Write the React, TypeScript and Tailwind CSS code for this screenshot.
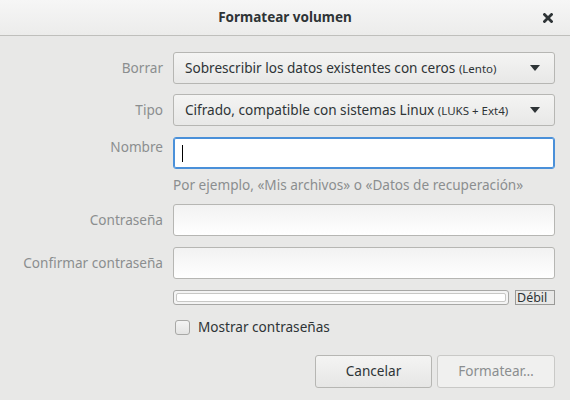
import React from 'react';

const font = { fontFamily: '"Noto Sans", "DejaVu Sans", sans-serif' };

function Combo({ text, hint }: { text: string; hint: string }) {
  return (
    <div className="flex h-[32px] flex-1 items-center justify-between rounded-[3px] border border-[#b6b6b3] bg-gradient-to-b from-[#f4f4f3] to-[#e8e8e7] pl-[11px] pr-[14px] text-[13.6px] text-[#2e3436]">
      <span>
        {text} <span className="text-[11.5px]">{hint}</span>
      </span>
      <svg width="10" height="6" viewBox="0 0 10 6">
        <path d="M0 0 L10 0 L5 6 Z" fill="#2e3436" />
      </svg>
    </div>
  );
}

function Entry({ focused }: { focused?: boolean }) {
  return (
    <div
      className={
        focused
          ? 'flex h-[32px] w-full items-center rounded-[3px] border border-[#4a90d9] bg-white pl-[8px] shadow-[inset_0_0_0_1px_#4a90d9]'
          : 'h-[32px] flex-1 rounded-[3px] border border-[#b6b6b3] bg-gradient-to-b from-[#f2f2f2] to-white'
      }
    >
      {focused && <div className="h-[17px] w-px bg-black" />}
    </div>
  );
}

export default function App() {
  return (
    <div className="h-[400px] w-[570px] overflow-hidden bg-[#e8e8e7]" style={font}>
      {/* Title bar */}
      <div className="relative flex h-[36px] items-center justify-center border-b border-[#bfbfbc] bg-gradient-to-b from-[#f6f6f6] to-[#ececeb]">
        <span className="text-[13.5px] font-bold text-[#2e3436]">Formatear volumen</span>
        <svg className="absolute right-[17px] top-[13px]" width="10" height="10" viewBox="0 0 10 10">
          <path d="M1.5 1.5 L8.5 8.5 M8.5 1.5 L1.5 8.5" stroke="#2e3436" strokeWidth="2.8" strokeLinecap="square" />
        </svg>
      </div>

      <div className="flex flex-col pr-[15px] pt-[16px] text-[13.6px]">
        <div className="flex items-center gap-[10px]">
          <div className="w-[163px] text-right text-[#8b8e8f]">Borrar</div>
          <Combo text="Sobrescribir los datos existentes con ceros" hint="(Lento)" />
        </div>

        <div className="mt-[10px] flex items-center gap-[10px]">
          <div className="w-[163px] text-right text-[#8b8e8f]">Tipo</div>
          <Combo text="Cifrado, compatible con sistemas Linux" hint="(LUKS + Ext4)" />
        </div>

        <div className="mt-[11px] flex items-start gap-[10px]">
          <div className="w-[163px] text-right text-[#8b8e8f]">Nombre</div>
          <div className="flex flex-1 flex-col">
            <Entry focused />
            <div className="mt-[6px] text-[#8b8e8f]">
              Por ejemplo, «Mis archivos» o «Datos de recuperación»
            </div>
          </div>
        </div>

        <div className="mt-[9px] flex items-center gap-[10px]">
          <div className="w-[163px] text-right text-[#8b8e8f]">Contraseña</div>
          <Entry />
        </div>

        <div className="mt-[11px] flex items-center gap-[10px]">
          <div className="w-[163px] text-right text-[#8b8e8f]">Confirmar contraseña</div>
          <Entry />
        </div>

        <div className="mt-[11px] flex items-center gap-[6px] pl-[173px]">
          <div className="h-[15px] flex-1 rounded-[3px] border border-[#a8a8a6] bg-[#f4f4f4] p-[2px]">
            <div className="h-full rounded-[2px] border border-[#c8c8c6] bg-white" />
          </div>
          <div className="flex h-[15px] w-[40px] items-center border border-[#9a9a98] pl-[1px] text-[12.5px] leading-none text-[#2e3436]">
            Débil
          </div>
        </div>

        <div className="mt-[12px] flex items-center gap-[8px] pl-[175px]">
          <div className="h-[15px] w-[15px] rounded-[3px] border border-[#a8a8a6] bg-gradient-to-b from-[#f4f4f4] to-[#e4e4e3]" />
          <span className="text-[#2e3436]">Mostrar contraseñas</span>
        </div>

        <div className="mt-[17px] flex justify-end gap-[5px]">
          <button className="h-[33px] w-[117px] rounded-[3px] border border-[#b6b6b3] bg-gradient-to-b from-[#f4f4f3] to-[#e6e6e5] text-[13.6px] text-[#2e3436]">
            Cancelar
          </button>
          <button className="h-[33px] w-[118px] rounded-[3px] border border-[#c9c9c7] bg-[#f0f0ef] text-[13.6px] text-[#8b8e8f]">
            Formatear…
          </button>
        </div>
      </div>
    </div>
  );
}
